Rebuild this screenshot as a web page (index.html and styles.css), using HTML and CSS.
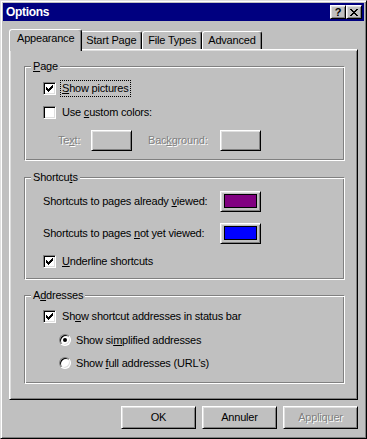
FILE: index.html
```html
<!DOCTYPE html>
<html lang="en">
<head>
    <meta charset="UTF-8">
    <title>Options</title>
    <link rel="stylesheet" href="styles.css">
</head>
<body>
    <div class="window">
        <div class="titlebar">
            <span class="title">Options</span>
            <div class="cap-buttons">
                <span class="cap-btn help">?</span>
                <span class="cap-btn close">
                    <svg width="8" height="7" viewBox="0 0 8 7" shape-rendering="crispEdges"><path d="M0 0h2v1h-2zM6 0h2v1h-2zM1 1h2v1h-2zM5 1h2v1h-2zM2 2h4v1h-4zM3 3h2v1h-2zM2 4h4v1h-4zM1 5h2v1h-2zM5 5h2v1h-2zM0 6h2v1h-2zM6 6h2v1h-2z"/></svg>
                </span>
            </div>
        </div>

        <div class="tabs">
            <div class="tab active">Appearance</div>
            <div class="tab">Start Page</div>
            <div class="tab">File Types</div>
            <div class="tab">Advanced</div>
        </div>

        <div class="panel">
            <fieldset class="group page-group">
                <legend><u>P</u>age</legend>
                <div class="row">
                    <span class="check"><svg width="7" height="7" viewBox="0 0 7 7" shape-rendering="crispEdges"><path d="M6 0h1v1h-1zM5 1h2v1h-2zM0 2h1v1h-1zM4 2h3v1h-3zM0 3h2v1h-2zM3 3h3v1h-3zM0 4h5v1h-5zM1 5h3v1h-3zM2 6h1v1h-1z"/></svg></span>
                    <span class="label focused"><u>S</u>how pictures</span>
                </div>
                <div class="row">
                    <span class="check"></span>
                    <span class="label">Use <u>c</u>ustom colors:</span>
                </div>
                <div class="row color-row">
                    <span class="disabled text-label">Te<u>x</u>t:</span>
                    <span class="color-btn"></span>
                    <span class="disabled bg-label">Bac<u>k</u>ground:</span>
                    <span class="color-btn"></span>
                </div>
            </fieldset>

            <fieldset class="group">
                <legend>Shortcu<u>t</u>s</legend>
                <div class="row link-row">
                    <span class="link-label">Shortcuts to pages already <u>v</u>iewed:</span>
                    <span class="color-btn"><span class="swatch visited"></span></span>
                </div>
                <div class="row link-row">
                    <span class="link-label">Shortcuts to pages <u>n</u>ot yet viewed:</span>
                    <span class="color-btn"><span class="swatch unvisited"></span></span>
                </div>
                <div class="row">
                    <span class="check"><svg width="7" height="7" viewBox="0 0 7 7" shape-rendering="crispEdges"><path d="M6 0h1v1h-1zM5 1h2v1h-2zM0 2h1v1h-1zM4 2h3v1h-3zM0 3h2v1h-2zM3 3h3v1h-3zM0 4h5v1h-5zM1 5h3v1h-3zM2 6h1v1h-1z"/></svg></span>
                    <span class="label"><u>U</u>nderline shortcuts</span>
                </div>
            </fieldset>

            <fieldset class="group address-group">
                <legend>A<u>d</u>dresses</legend>
                <div class="row">
                    <span class="check"><svg width="7" height="7" viewBox="0 0 7 7" shape-rendering="crispEdges"><path d="M6 0h1v1h-1zM5 1h2v1h-2zM0 2h1v1h-1zM4 2h3v1h-3zM0 3h2v1h-2zM3 3h3v1h-3zM0 4h5v1h-5zM1 5h3v1h-3zM2 6h1v1h-1z"/></svg></span>
                    <span class="label">Sh<u>o</u>w shortcut addresses in status bar</span>
                </div>
                <div class="row radio-row">
                    <span class="radio checked"></span>
                    <span class="label">Show si<u>m</u>plified addresses</span>
                </div>
                <div class="row radio-row">
                    <span class="radio"></span>
                    <span class="label">Show <u>f</u>ull addresses (URL's)</span>
                </div>
            </fieldset>
        </div>

        <div class="actions">
            <span class="btn">OK</span>
            <span class="btn">Annuler</span>
            <span class="btn disabled">Appliquer</span>
        </div>
    </div>
</body>
</html>
```

FILE: styles.css
```css
* {
    box-sizing: border-box;
}

body {
    margin: 0;
    font-family: "Liberation Sans", Arial, sans-serif;
    font-size: 11px;
    line-height: 13px;
    letter-spacing: -0.2px;
    color: #000;
    background: #c0c0c0;
}

/* window frame */
.window {
    width: 367px;
    height: 439px;
    background: #c0c0c0;
    border: 1px solid;
    border-color: #dfdfdf #000 #000 #dfdfdf;
    box-shadow: inset 1px 1px #fff, inset -1px -1px #808080;
    padding: 2px;
}

.titlebar {
    height: 18px;
    background: #000080;
    color: #fff;
    display: flex;
    align-items: center;
    justify-content: space-between;
    padding: 0 2px 0 3px;
}

.title {
    font-weight: bold;
    font-size: 12px;
    letter-spacing: -0.3px;
}

.cap-buttons {
    display: flex;
}

.cap-btn {
    width: 16px;
    height: 14px;
    background: #c0c0c0;
    border: 1px solid;
    border-color: #fff #000 #000 #fff;
    box-shadow: inset 1px 1px #dfdfdf, inset -1px -1px #808080;
    display: flex;
    align-items: center;
    justify-content: center;
    color: #000;
}

.help {
    font-weight: bold;
    letter-spacing: 0;
    font-size: 11px;
}

.close svg {
    display: block;
}

/* tabs */
.tabs {
    display: flex;
    align-items: flex-end;
    height: 20px;
    margin: 8px 0 0 8px;
}

.tab {
    height: 18px;
    line-height: 17px;
    padding: 0 5px;
    border: 1px solid;
    border-bottom: 0;
    border-color: #fff #000 transparent #fff;
    border-radius: 3px 3px 0 0;
    box-shadow: inset -1px 0 #808080;
    background: #c0c0c0;
}

.tab.active {
    position: relative;
    z-index: 1;
    height: 22px;
    line-height: 16px;
    margin: 0 -2px -2px;
    padding: 0 7px;
}

.panel {
    height: 351px;
    margin: 0 6px;
    padding: 10px 12px 0 14px;
    border: 1px solid;
    border-color: #fff #000 #000 #fff;
    box-shadow: inset 1px 1px #dfdfdf, inset -1px -1px #808080;
}

/* group boxes */
.group {
    margin: 0;
    min-width: 0;
    padding: 9px 10px 9px 18px;
    border: 1px solid;
    border-color: #808080 #fff #fff #808080;
    box-shadow: inset 1px 1px #fff, inset -1px -1px #808080;
}

.group + .group {
    margin-top: 10px;
}

.group legend {
    padding: 0 2px;
    margin-left: -12px;
    line-height: 13px;
    background: #c0c0c0;
}

.group:nth-of-type(2) {
    padding-top: 7px;
    padding-bottom: 11px;
}

.address-group {
    margin-top: 9px !important;
    padding-top: 8px;
    padding-bottom: 14px;
}

.row {
    display: flex;
    align-items: center;
    height: 13px;
}

.row + .row {
    margin-top: 11px;
}

.check {
    width: 13px;
    height: 13px;
    flex: none;
    background: #fff;
    border: 1px solid;
    border-color: #808080 #fff #fff #808080;
    box-shadow: inset 1px 1px #000, inset -1px -1px #dfdfdf;
}

.check svg {
    display: block;
    margin: 2px;
}

.label {
    margin-left: 5px;
    padding: 0 1px;
    white-space: nowrap;
}

.focused {
    outline: 1px dotted #000;
    padding: 1px;
}

.radio-row {
    height: 12px;
    padding-left: 16px;
}

.radio {
    width: 12px;
    height: 12px;
    flex: none;
    border-radius: 50%;
    background: #fff;
    border: 1px solid;
    border-color: #808080 #fff #fff #808080;
    box-shadow: inset 1px 1px #000, inset -1px -1px #dfdfdf;
    display: flex;
    align-items: center;
    justify-content: center;
}

.radio.checked::after {
    content: "";
    width: 4px;
    height: 4px;
    border-radius: 50%;
    background: #000;
}

.radio-row .label {
    margin-left: 4px;
}

/* colour buttons */
.color-row,
.link-row {
    height: 21px;
}

.color-btn {
    width: 41px;
    height: 21px;
    flex: none;
    padding: 2px 3px 3px;
    border: 1px solid;
    border-color: #fff #000 #000 #fff;
    box-shadow: inset 1px 1px #dfdfdf, inset -1px -1px #808080;
}

.swatch {
    display: block;
    height: 100%;
    border: 1px solid #000;
}

.visited {
    background: #800080;
}

.unvisited {
    background: #0000ff;
}

.disabled {
    color: #808080;
    text-shadow: 1px 1px 0 #fff;
}

.text-label {
    width: 33px;
    margin-left: 15px;
}

.bg-label {
    width: 72px;
    margin-left: 16px;
}

.link-label {
    width: 177px;
    flex: none;
    white-space: nowrap;
}

/* dialog buttons */
.actions {
    display: flex;
    justify-content: flex-end;
    gap: 6px;
    margin-top: 6px;
    padding-right: 6px;
}

.btn {
    width: 75px;
    height: 23px;
    display: flex;
    align-items: center;
    justify-content: center;
    border: 1px solid;
    border-color: #fff #000 #000 #fff;
    box-shadow: inset 1px 1px #dfdfdf, inset -1px -1px #808080;
}
```
